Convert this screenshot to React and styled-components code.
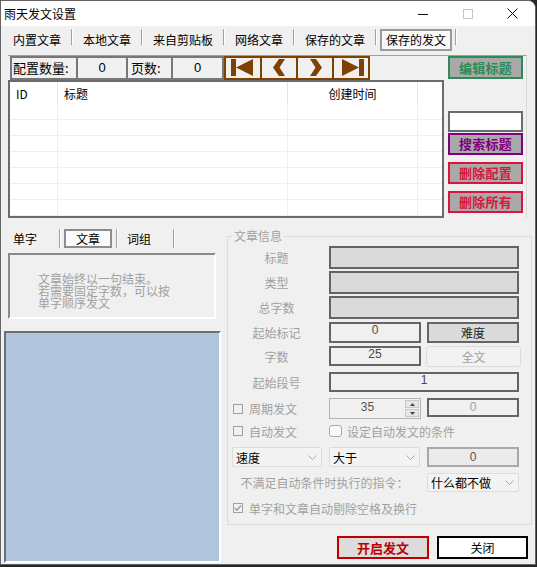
import React from 'react';
import styled, { createGlobalStyle, css } from 'styled-components';

const FONT = `"Noto Sans CJK SC", "Noto Sans", sans-serif`;
const NUM = `"Liberation Sans", "DejaVu Sans", sans-serif`;

const GlobalStyle = createGlobalStyle`
  html, body { margin: 0; padding: 0; background: #262626; }
  body { font-family: ${FONT}; }
  #root { width: 537px; height: 567px; }
  * { box-sizing: border-box; }
`;

const Window = styled.div`
  width: 536px;
  height: 565px;
  border: 1px solid #646464;
  border-radius: 0 8px 0 0;
  background: #f0f0f0;
  display: flex;
  flex-direction: column;
  overflow: hidden;
  font-family: ${FONT};
  font-size: 12px;
  color: #000;
`;

const TitleBar = styled.div`
  height: 25px;
  flex-shrink: 0;
  background: #fff;
  display: flex;
  align-items: center;
  padding-left: 3px;
`;
const TitleText = styled.span`
  font-size: 12px;
  line-height: 14px;
`;
const Controls = styled.div`
  margin-left: auto;
  display: flex;
  height: 100%;
`;
const Ctrl = styled.div`
  width: 45px;
  height: 100%;
  display: flex;
  align-items: center;
  justify-content: center;
`;

const TabRow = styled.div`
  height: 27px;
  flex-shrink: 0;
  display: flex;
  align-items: flex-start;
  padding: 3px 0 0 2px;
`;
const Tab = styled.div`
  height: 22px;
  line-height: 22px;
  padding: 0 10px;
  font-size: 12px;
  white-space: nowrap;
  ${p => p.$active && css`
    padding: 0 4px;
    margin: 0 3px;
    border: 2px solid #9b9b9b;
    line-height: 18px;
    background: #f9f9f9;
  `}
`;
const Sep = styled.div`
  width: 2px;
  height: ${p => p.$h}px;
  border-left: 1px solid #a0a0a0;
  border-right: 1px solid #fff;
  flex-shrink: 0;
`;

const TopBox = styled.div`
  margin: 2px 0 0 7px;
  width: 519px;
  height: 163px;
  flex-shrink: 0;
  display: flex;
  border-top: 1px solid #a0a0a0;
  border-right: 1px solid #d8d8d8;
`;
const LeftPane = styled.div`
  width: 436px;
  display: flex;
  flex-direction: column;
`;
const HeaderRow = styled.div`
  height: 24px;
  display: flex;
  padding-left: 2px;
`;
const HCell = styled.div`
  width: ${p => p.$w}px;
  height: 24px;
  border: 2px solid #777;
  margin-left: ${p => (p.$first ? 0 : -2)}px;
  font-size: 13px;
  line-height: 20px;
  text-align: ${p => p.$align || 'left'};
  padding-left: ${p => p.$pad || 0}px;
  font-family: ${p => (p.$num ? NUM : FONT)};
  white-space: nowrap;
`;
const NavBtn = styled.div`
  width: 38px;
  height: 24px;
  border: 2px solid #804000;
  margin-left: ${p => (p.$first ? 0 : -2)}px;
  background: #f0f0f0;
  display: flex;
  align-items: center;
  justify-content: center;
`;
const List = styled.div`
  flex: 1;
  border: 2px solid #6b6b6b;
  background: #fff;
  overflow: hidden;
`;
const ListGrid = styled.div`
  display: grid;
  grid-template-columns: 47px 230px 130px 1fr;
`;
const HeadCell = styled.div`
  height: 22px;
  padding: 3px 0 0 6px;
  line-height: 18px;
  font-size: 12px;
  border-left: ${p => (p.$first ? 'none' : '1px solid #e3e3e3')};
  text-align: ${p => (p.$center ? 'center' : 'left')};
  ${p => p.$center && css`padding-left: 0;`}
`;
const RowCell = styled.div`
  height: 16px;
  border-bottom: 1px solid #efefef;
  border-left: ${p => (p.$first ? 'none' : '1px solid #efefef')};
`;

const RightPane = styled.div`
  width: 82px;
  padding-left: 4px;
  display: flex;
  flex-direction: column;
`;
const ColorButton = styled.div`
  width: 75px;
  height: ${p => p.$h}px;
  margin-top: ${p => p.$mt}px;
  border: 2px solid ${p => p.$c};
  background: #a9a9a9;
  color: ${p => p.$c};
  font-weight: bold;
  font-size: 13px;
  line-height: ${p => p.$h - 4}px;
  text-align: center;
  letter-spacing: 0.3px;
`;
const SearchInput = styled.div`
  width: 75px;
  height: 21px;
  margin-top: 32px;
  border: 2px solid #6b6b6b;
  background: #fff;
`;

const Middle = styled.div`
  flex: 1;
  display: flex;
  padding: 9px 0 1px 3px;
`;
const LeftCol = styled.div`
  width: 217px;
  display: flex;
  flex-direction: column;
`;
const SubTabs = styled.div`
  margin-top: 2px;
  height: 19px;
  display: flex;
`;
const SubTab = styled.div`
  height: 19px;
  line-height: 19px;
  padding: 0 22px 0 9px;
  font-size: 12px;
  white-space: nowrap;
  ${p => p.$active && css`
    padding: 0 10px;
    margin: 0 4px 0 3px;
    border: 2px solid #8d8d8d;
    line-height: 15px;
    background: #fafafa;
  `}
`;
const HintBox = styled.div`
  margin: 5px 0 0 4px;
  width: 208px;
  height: 66px;
  border-top: 2px solid #8a8a8a;
  border-left: 2px solid #8a8a8a;
  border-bottom: 2px solid #fff;
  border-right: 2px solid #fff;
  padding: 18px 0 0 28px;
  color: #a0a0a0;
  font-size: 12px;
  line-height: 12px;
  white-space: pre-line;
`;
const BluePanel = styled.div`
  margin-top: 12px;
  flex: 1;
  border-top: 2px solid #6e6e6e;
  border-left: 2px solid #6e6e6e;
  border-bottom: 2px solid #fff;
  border-right: 2px solid #fff;
  background: #b0c4de;
`;

const RightCol = styled.div`
  margin-left: 6px;
  width: 305px;
  display: flex;
  flex-direction: column;
`;
const Group = styled.fieldset`
  margin: 0;
  padding: 1px 0 0 0;
  border: 1px solid #dcdcdc;
  min-width: 0;
`;
const Legend = styled.legend`
  margin-left: 4px;
  padding: 0 2px;
  font-size: 12px;
  line-height: 18px;
  color: #a0a0a0;
`;
const InfoGrid = styled.div`
  display: grid;
  grid-template-columns: 101px 92px 98px;
  grid-template-rows: 25px 25px 26px 24px 26px 26px 27px 22px 26px 30px 21px;
  align-items: start;
`;
const Label = styled.div`
  grid-column: 1;
  height: ${p => p.$h}px;
  display: flex;
  align-items: center;
  justify-content: center;
  padding-right: 4px;
  color: #a0a0a0;
  font-size: 12px;
`;
const GrayField = styled.div`
  grid-column: 2 / 4;
  width: 190px;
  height: 23px;
  border: 2px solid #646464;
  background: #dadada;
`;
const ValueField = styled.div`
  grid-column: ${p => p.$col};
  width: ${p => p.$w}px;
  height: ${p => p.$h}px;
  margin-left: ${p => p.$ml || 0}px;
  border: 2px solid #646464;
  background: #f0f0f0;
  text-align: center;
  color: ${p => p.$c || '#4a4a4a'};
  font-family: ${NUM};
  font-size: 12px;
  line-height: ${p => p.$lh || 12}px;
`;
const DarkButton = styled.div`
  grid-column: 3;
  margin-left: 6px;
  width: 92px;
  height: 21px;
  border: 2px solid #646464;
  background: #dadada;
  color: #222;
  text-align: center;
  line-height: 17px;
  font-size: 12px;
`;
const FlatButton = styled.div`
  grid-column: 3;
  margin-left: 5px;
  width: 95px;
  height: 21px;
  border: 1px solid #dcdcdc;
  border-radius: 3px;
  background: #f2f2f2;
  color: #a0a0a0;
  text-align: center;
  line-height: 19px;
  font-size: 12px;
`;
const CheckRow = styled.div`
  grid-column: ${p => p.$col || 1};
  margin-left: 5px;
  height: ${p => p.$h}px;
  display: flex;
  align-items: center;
  gap: 6px;
  color: #a0a0a0;
  font-size: 12px;
  white-space: nowrap;
`;
const Box = styled.span`
  width: 10px;
  height: 10px;
  border: 1px solid #a0a0a0;
  flex-shrink: 0;
  display: flex;
  align-items: center;
  justify-content: center;
`;
const RoundRow = styled.div`
  grid-column: 2 / 4;
  height: 12px;
  display: flex;
  align-items: center;
  gap: 5px;
  color: #a0a0a0;
  font-size: 12px;
  white-space: nowrap;
`;
const RoundBox = styled.span`
  width: 13px;
  height: 12px;
  border: 1px solid #a8a8a8;
  border-radius: 3px;
  background: #fafafa;
  flex-shrink: 0;
`;
const Spin = styled.div`
  grid-column: 2;
  width: 92px;
  height: 21px;
  border: 1px solid #b4b4b4;
  background: #f0f0f0;
  display: flex;
`;
const SpinValue = styled.div`
  flex: 1;
  text-align: center;
  font-family: ${NUM};
  font-size: 12px;
  line-height: 17px;
  color: #555;
`;
const SpinButtons = styled.div`
  width: 14px;
  margin: 1px 1px 1px 0;
  display: flex;
  flex-direction: column;
  gap: 1px;
`;
const SpinHalf = styled.div`
  flex: 1;
  background: #e6e6e6;
  border: 1px solid #c8c8c8;
  display: flex;
  align-items: center;
  justify-content: center;
`;
const ThinBox = styled.div`
  grid-column: 3;
  margin-left: 6px;
  width: 92px;
  height: 20px;
  border: 2px solid #a8a8a8;
  background: #ebebeb;
  text-align: center;
  font-family: ${NUM};
  font-size: 12px;
  line-height: 16px;
  color: #555;
`;
const Select = styled.div`
  grid-column: ${p => p.$col};
  margin-left: ${p => p.$ml || 0}px;
  width: ${p => p.$w}px;
  height: ${p => p.$h}px;
  border: 1px solid #dcdcdc;
  border-radius: 2px;
  background: #f3f3f3;
  display: flex;
  align-items: center;
  justify-content: space-between;
  padding: 0 4px 0 3px;
  font-size: 12px;
  color: #000;
  white-space: nowrap;
`;
const HintLabel = styled.div`
  grid-column: 1 / 3;
  height: 19px;
  line-height: 19px;
  text-align: center;
  color: #a0a0a0;
  font-size: 12px;
  white-space: nowrap;
`;
const BtnRow = styled.div`
  margin-top: 11px;
  display: flex;
  justify-content: flex-end;
  gap: 8px;
  padding-right: 4px;
`;
const ActionButton = styled.div`
  width: ${p => p.$w}px;
  height: 23px;
  border: 2px solid ${p => p.$border};
  background: ${p => p.$bg};
  color: ${p => p.$c};
  font-weight: ${p => (p.$bold ? 'bold' : 'normal')};
  font-size: ${p => (p.$bold ? 13 : 12)}px;
  line-height: 19px;
  text-align: center;
`;

const Chevron = () => (
  <svg width="9" height="5" viewBox="0 0 9 5">
    <path d="M0.5 0.5 L4.5 4.5 L8.5 0.5" fill="none" stroke="#a8a8a8" strokeWidth="1" />
  </svg>
);

const NavIcon = ({ kind }) => {
  const c = '#804000';
  let shape;
  if (kind === 'first') {
    shape = (
      <>
        <rect x="5" y="1" width="5" height="17" fill={c} />
        <polygon points="10,9.5 27,1 27,18" fill={c} />
      </>
    );
  } else if (kind === 'prev') {
    shape = <polygon points="23,1 17,1 11,9.5 17,18 23,18 17.5,9.5" fill={c} />;
  } else if (kind === 'next') {
    shape = <polygon points="12,1 18,1 24,9.5 18,18 12,18 17.5,9.5" fill={c} />;
  } else {
    shape = (
      <>
        <polygon points="8,1 8,18 25,9.5" fill={c} />
        <rect x="25" y="1" width="5" height="17" fill={c} />
      </>
    );
  }
  return (
    <svg width="34" height="20" viewBox="0 0 34 20">
      {shape}
    </svg>
  );
};

const topTabs = ['内置文章', '本地文章', '来自剪贴板', '网络文章', '保存的文章', '保存的发文'];

export default function App() {
  const rows = Array.from({ length: 7 });
  return (
    <>
      <GlobalStyle />
      <Window>
        <TitleBar>
          <TitleText>雨天发文设置</TitleText>
          <Controls>
            <Ctrl>
              <svg width="10" height="10" viewBox="0 0 10 10">
                <line x1="0" y1="5.5" x2="10" y2="5.5" stroke="#111" strokeWidth="1" />
              </svg>
            </Ctrl>
            <Ctrl>
              <svg width="10" height="10" viewBox="0 0 10 10">
                <rect x="0.5" y="0.5" width="9" height="9" fill="none" stroke="#c4c4c4" strokeWidth="1" />
              </svg>
            </Ctrl>
            <Ctrl>
              <svg width="11" height="11" viewBox="0 0 11 11">
                <path d="M0.5 0.5 L10.5 10.5 M10.5 0.5 L0.5 10.5" stroke="#111" strokeWidth="1" />
              </svg>
            </Ctrl>
          </Controls>
        </TitleBar>

        <TabRow>
          {topTabs.map((t, i) => (
            <React.Fragment key={t}>
              <Tab $active={i === 5}>{t}</Tab>
              <Sep $h={16} />
            </React.Fragment>
          ))}
        </TabRow>

        <TopBox>
          <LeftPane>
            <HeaderRow>
              <HCell $first $w={68} $pad={1}>配置数量:</HCell>
              <HCell $w={52} $align="center" $num>0</HCell>
              <HCell $w={47} $pad={3}>页数:</HCell>
              <HCell $w={53} $align="center" $num>0</HCell>
              <NavBtn $first><NavIcon kind="first" /></NavBtn>
              <NavBtn><NavIcon kind="prev" /></NavBtn>
              <NavBtn><NavIcon kind="next" /></NavBtn>
              <NavBtn><NavIcon kind="last" /></NavBtn>
            </HeaderRow>
            <List>
              <ListGrid>
                <HeadCell $first>ID</HeadCell>
                <HeadCell>标题</HeadCell>
                <HeadCell $center>创建时间</HeadCell>
                <HeadCell />
                {rows.map((_, i) => (
                  <React.Fragment key={i}>
                    <RowCell $first />
                    <RowCell />
                    <RowCell />
                    <RowCell />
                  </React.Fragment>
                ))}
              </ListGrid>
            </List>
          </LeftPane>
          <RightPane>
            <ColorButton $h={23} $mt={0} $c="#2e8b57">编辑标题</ColorButton>
            <SearchInput />
            <ColorButton $h={22} $mt={1} $c="#800080">搜索标题</ColorButton>
            <ColorButton $h={22} $mt={7} $c="#dc143c">删除配置</ColorButton>
            <ColorButton $h={22} $mt={7} $c="#dc143c">删除所有</ColorButton>
          </RightPane>
        </TopBox>

        <Middle>
          <LeftCol>
            <SubTabs>
              <SubTab>单字</SubTab>
              <Sep $h={19} />
              <SubTab $active>文章</SubTab>
              <Sep $h={19} />
              <SubTab>词组</SubTab>
              <Sep $h={19} />
            </SubTabs>
            <HintBox>{'文章始终以一句结束。\n若需要固定字数，可以按\n单字顺序发文'}</HintBox>
            <BluePanel />
          </LeftCol>

          <RightCol>
            <Group>
              <Legend>文章信息</Legend>
              <InfoGrid>
                <Label $h={23}>标题</Label>
                <GrayField />
                <Label $h={23}>类型</Label>
                <GrayField />
                <Label $h={23}>总字数</Label>
                <GrayField />

                <Label $h={21}>起始标记</Label>
                <ValueField $col={2} $w={92} $h={21}>0</ValueField>
                <DarkButton>难度</DarkButton>

                <Label $h={20}>字数</Label>
                <ValueField $col={2} $w={92} $h={20}>25</ValueField>
                <FlatButton>全文</FlatButton>

                <Label $h={20}>起始段号</Label>
                <ValueField $col="2 / 4" $w={190} $h={20}>1</ValueField>

                <CheckRow $h={21}><Box />周期发文</CheckRow>
                <Spin>
                  <SpinValue>35</SpinValue>
                  <SpinButtons>
                    <SpinHalf>
                      <svg width="5" height="3" viewBox="0 0 5 3"><polygon points="2.5,0 5,3 0,3" fill="#444" /></svg>
                    </SpinHalf>
                    <SpinHalf>
                      <svg width="5" height="3" viewBox="0 0 5 3"><polygon points="0,0 5,0 2.5,3" fill="#444" /></svg>
                    </SpinHalf>
                  </SpinButtons>
                </Spin>
                <ValueField $col={3} $ml={6} $w={92} $h={19} $c="#a0a0a0" $lh={15}>0</ValueField>

                <CheckRow $h={12}><Box />自动发文</CheckRow>
                <RoundRow><RoundBox />设定自动发文的条件</RoundRow>

                <Select $col={1} $ml={4} $w={90} $h={20}>速度<Chevron /></Select>
                <Select $col={2} $w={91} $h={20}>大于<Chevron /></Select>
                <ThinBox>0</ThinBox>

                <HintLabel>不满足自动条件时执行的指令：</HintLabel>
                <Select $col={3} $ml={6} $w={92} $h={19}>什么都不做<Chevron /></Select>

                <CheckRow $col="1 / -1" $h={10}>
                  <Box>
                    <svg width="8" height="8" viewBox="0 0 8 8">
                      <path d="M1 4 L3 6.2 L7 1.5" fill="none" stroke="#9a9a9a" strokeWidth="1.3" />
                    </svg>
                  </Box>
                  单字和文章自动剔除空格及换行
                </CheckRow>
              </InfoGrid>
            </Group>
            <BtnRow>
              <ActionButton $w={92} $border="#c00000" $bg="#dcdcdc" $c="#c00000" $bold>开启发文</ActionButton>
              <ActionButton $w={91} $border="#000" $bg="#fff" $c="#000">关闭</ActionButton>
            </BtnRow>
          </RightCol>
        </Middle>
      </Window>
    </>
  );
}
